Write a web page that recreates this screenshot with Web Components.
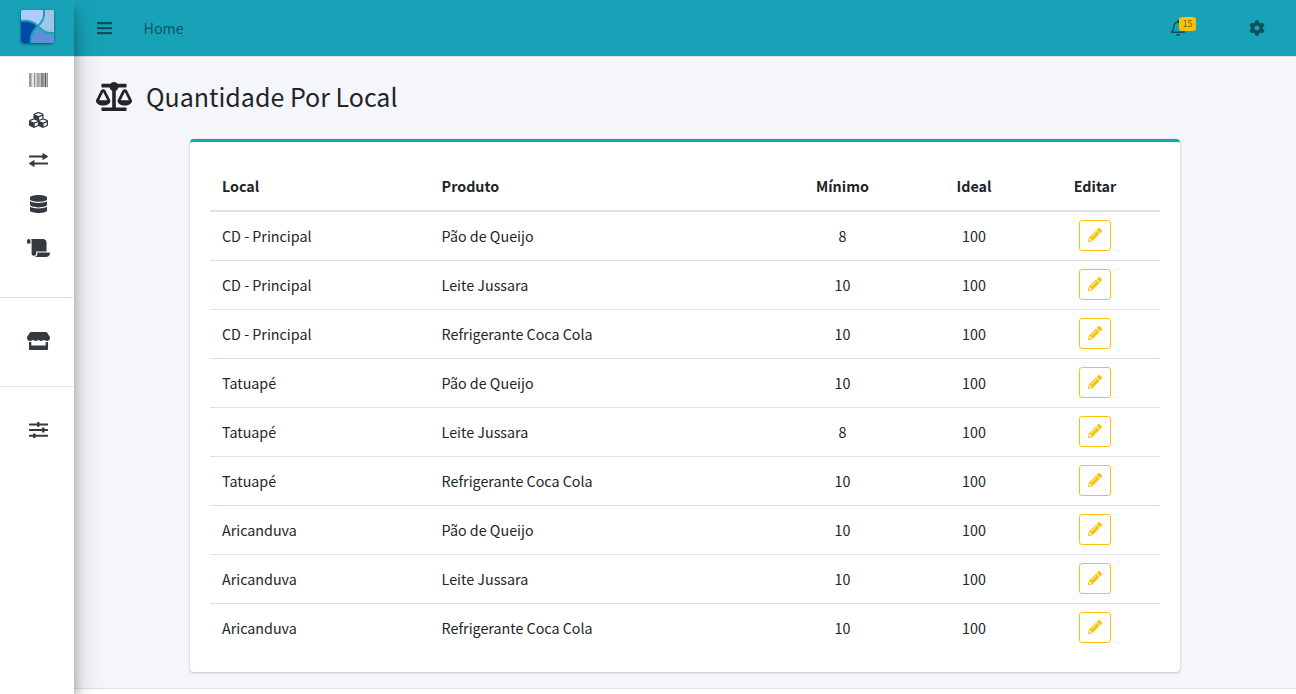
<!DOCTYPE html>
<html lang="pt-BR">
<head>
<meta charset="utf-8">
<title>Quantidade Por Local</title>
<style>
html,body{margin:0;height:100%;overflow:hidden}
body{font-family:"Noto Sans CJK SC","Noto Sans",sans-serif;font-size:14.300px;line-height:24px;color:#212529;background:#f4f6f9}
</style>
</head>
<body>
<app-shell>
  <side-bar slot="side"></side-bar>
  <top-bar slot="top">Home</top-bar>
  <page-title slot="main">Quantidade Por Local</page-title>
  <stock-card slot="main"><stock-table></stock-table></stock-card>
</app-shell>
<script>
const define = (name, html, setup) => customElements.define(name, class extends HTMLElement {
  connectedCallback() {
    if (this.shadowRoot) return;
    const root = this.attachShadow({mode: 'open'});
    const t = document.createElement('template');
    t.innerHTML = html;
    root.append(t.content.cloneNode(true));
    if (setup) setup(root, this);
  }
});

const ICONS = {
  bars: ['0 0 448 512', '<path d="M16 132h416c9 0 16-7 16-16V76c0-9-7-16-16-16H16C7 60 0 67 0 76v40c0 9 7 16 16 16zm0 160h416c9 0 16-7 16-16v-40c0-9-7-16-16-16H16c-9 0-16 7-16 16v40c0 9 7 16 16 16zm0 160h416c9 0 16-7 16-16v-40c0-9-7-16-16-16H16c-9 0-16 7-16 16v40c0 9 7 16 16 16z"/>'],
  scale: ['0 0 640 512', '<path d="M256 336h-.02c0-16.18 1.34-8.73-85.05-181.51-17.65-35.29-68.19-35.36-85.87 0C-2.06 328.75.02 320.33.02 336H0c0 44.18 57.31 80 128 80s128-35.82 128-80zM128 176l72 144H56l72-144zm511.98 160c0-16.18 1.34-8.73-85.05-181.51-17.65-35.29-68.19-35.36-85.87 0-87.12 174.26-85.04 165.84-85.04 181.51H384c0 44.18 57.31 80 128 80s128-35.82 128-80h-.02zM440 320l72-144 72 144H440zm88 128H352V153.25c23.51-10.29 41.16-31.48 46.39-57.25H528c8.84 0 16-7.16 16-16V48c0-8.84-7.16-16-16-16H383.64C369.04 12.68 346.09 0 320 0s-49.04 12.68-63.64 32H112c-8.84 0-16 7.16-16 16v32c0 8.84 7.16 16 16 16h129.61c5.23 25.76 22.87 46.96 46.39 57.25V448H112c-8.84 0-16 7.16-16 16v32c0 8.84 7.16 16 16 16h416c8.84 0 16-7.16 16-16v-32c0-8.84-7.16-16-16-16z"/>'],
  database: ['0 0 448 512', '<path d="M448 73.143v45.714C448 159.143 347.667 192 224 192S0 159.143 0 118.857V73.143C0 32.857 100.333 0 224 0s224 32.857 224 73.143zM448 176v102.857C448 319.143 347.667 352 224 352S0 319.143 0 278.857V176c48.125 33.143 136.208 48.572 224 48.572S399.874 209.143 448 176zm0 160v102.857C448 479.143 347.667 512 224 512S0 479.143 0 438.857V336c48.125 33.143 136.208 48.572 224 48.572S399.874 369.143 448 336z"/>'],
  scroll: ['0 0 640 512', '<path d="M48 0C21.53 0 0 21.53 0 48v64c0 8.84 7.16 16 16 16h80V48C96 21.53 74.47 0 48 0zm208 412.57V352h288V96c0-52.94-43.06-96-96-96H111.59C121.74 13.41 128 29.92 128 48v368c0 38.87 34.65 69.65 74.75 63.12C234.22 474 256 444.46 256 412.57zM288 384v32c0 52.93-43.06 96-96 96h336c61.86 0 112-50.14 112-112 0-8.84-7.16-16-16-16H288z"/>'],
  pencil: ['0 0 512 512', '<path d="M497.9 142.1l-46.1 46.1c-4.7 4.7-12.3 4.7-17 0l-111-111c-4.7-4.7-4.7-12.3 0-17l46.1-46.1c18.7-18.7 49.1-18.7 67.9 0l60.1 60.1c18.8 18.7 18.8 49.1 0 67.9zM284.2 99.8L21.6 362.4.4 483.9c-2.9 16.4 11.4 30.6 27.8 27.8l121.5-21.3 262.6-262.6c4.7-4.7 4.7-12.3 0-17l-111-111c-4.8-4.7-12.4-4.7-17.1 0zM124.1 339.9c-5.5-5.5-5.5-14.3 0-19.8l154-154c5.5-5.5 14.3-5.5 19.8 0s5.5 14.3 0 19.8l-154 154c-5.5 5.5-14.3 5.5-19.8 0zM88 424h48v36.3l-64.5 11.3-31.1-31.1L51.7 376H88v48z"/>'],
  cog: ['0 0 512 512', '<path d="M487.4 315.7l-42.6-24.6c4.3-23.2 4.3-47 0-70.2l42.6-24.6c4.9-2.8 7.1-8.6 5.5-14-11.1-35.6-30-67.8-54.7-94.6-3.8-4.1-10-5.1-14.8-2.3L380.8 110c-17.9-15.4-38.5-27.3-60.8-35.1V25.8c0-5.6-3.9-10.5-9.4-11.7-36.7-8.2-74.3-7.8-109.2 0-5.5 1.2-9.4 6.1-9.4 11.7V75c-22.2 7.9-42.8 19.8-60.8 35.1L88.7 85.5c-4.9-2.8-11-1.9-14.8 2.3-24.7 26.7-43.6 58.9-54.7 94.6-1.7 5.4.6 11.2 5.5 14L67.3 221c-4.3 23.2-4.3 47 0 70.2l-42.6 24.6c-4.9 2.8-7.1 8.6-5.5 14 11.1 35.6 30 67.8 54.7 94.6 3.8 4.1 10 5.1 14.8 2.3l42.6-24.6c17.9 15.4 38.5 27.3 60.8 35.1v49.2c0 5.6 3.9 10.5 9.4 11.7 36.7 8.2 74.3 7.8 109.2 0 5.5-1.2 9.4-6.1 9.4-11.7v-49.2c22.2-7.9 42.8-19.8 60.8-35.1l42.6 24.6c4.9 2.8 11 1.9 14.8-2.3 24.7-26.7 43.6-58.9 54.7-94.6 1.5-5.5-.7-11.3-5.6-14.1zM256 336c-44.1 0-80-35.9-80-80s35.9-80 80-80 80 35.9 80 80-35.9 80-80 80z"/>'],
  bell: ['0 0 448 512', '<path d="M439.39 362.29c-19.32-20.76-55.47-51.99-55.47-154.29 0-77.7-54.48-139.9-127.94-155.16V32c0-17.67-14.32-32-31.98-32s-31.98 14.33-31.98 32v20.84C118.56 68.1 64.08 130.3 64.08 208c0 102.3-36.15 133.53-55.47 154.29-6 6.45-8.66 14.16-8.61 21.71.11 16.4 12.98 32 32.1 32h383.8c19.12 0 32-15.6 32.1-32 .05-7.55-2.61-15.27-8.61-21.71zM67.53 368c21.22-27.97 44.42-74.33 44.53-159.42 0-.2-.06-.38-.06-.58 0-61.86 50.14-112 112-112s112 50.14 112 112c0 .2-.06.38-.06.58.11 85.1 23.31 131.46 44.53 159.42H67.53zM224 512c35.32 0 63.97-28.65 63.97-64H160.03c0 35.35 28.65 64 63.97 64z"/>'],
  barcode: ['0 0 19 14', ['#a89a94','#7e9eb4','#b5c3bd','#e6eecb','#d8e2f0','#a58dab','#d8d0b8','#c4d3c9','#a8a0c4','#9ab0a8','#d0a6a8','#8fd3c9','#a07c9c','#7c8494','#c0847e','#a0c8a0','#3d5b4a','#c6d6a0','#7c90a8'].map((c, i) => `<path fill="${c}" d="M${i} 0h1v14h-1z"/>`).join('')],
  cubes: ['0 32 512 448', '<path d="M488.6 250.2L392 214V105.5c0-15-9.3-28.4-23.4-33.7l-100-37.5c-8.1-3.1-17.1-3.1-25.3 0l-100 37.5c-14.1 5.3-23.4 18.7-23.4 33.7V214l-96.6 36.2C9.3 255.5 0 268.900 0 283.900V394c0 13.600 7.700 26.100 19.900 32.200l100 50c10.100 5.100 22.100 5.100 32.200 0l103.900-52 103.900 52c10.100 5.100 22.100 5.100 32.200 0l100-50c12.200-6.100 19.900-18.600 19.900-32.200V283.900c0-15-9.300-28.400-23.400-33.700zM358 214.800l-85 31.900v-68.200l85-37v73.300zM154 104.100l102-38.200 102 38.200v.6l-102 41.400-102-41.400v-.6zm84 291.100l-85 42.500v-79.100l85-38.800v75.400zm0-112l-102 41.400-102-41.400v-.6l102-38.200 102 38.200v.6zm240 112l-85 42.500v-79.100l85-38.800v75.400zm0-112l-102 41.400-102-41.400v-.6l102-38.200 102 38.200v.6z"/>'],
  exchange: ['0 0 19 14', '<path d="M.5 2.500h13V.5q0-.7.700-.3L18.700 3q.5.500 0 1L14.200 6.800q-.7.4-.7-.3V4.500H.500Q0 4.500 0 4V3q0-.5.500-.5zM18.500 9.500h-13V7.500q0-.7-.7-.3L.3 10q-.5.500 0 1l4.500 2.800q.7.4.7-.3v-2h13q.5 0 .5-.5v-1q0-.5-.5-.5z"/>'],
  store: ['0 0 616 512', '<path d="M602 118.6L537.1 15C531.3 5.7 521 0 510 0H106C95 0 84.7 5.7 78.9 15L14 118.6c-33.500 53.500-3.800 127.900 58.800 136.400 4.500.6 9.100.9 13.700.9 29.600 0 55.800-13 73.800-33.100 18 20.100 44.300 33.100 73.800 33.100 29.600 0 55.800-13 73.800-33.100 18 20.100 44.300 33.100 73.800 33.100 29.600 0 55.800-13 73.800-33.100 18.100 20.100 44.300 33.100 73.800 33.100 4.700 0 9.200-.3 13.700-.9 62.800-8.400 92.600-82.800 59-136.400zM529.500 288c-10 0-19.900-1.500-29.500-3.800V384H116v-99.800c-9.600 2.200-19.500 3.800-29.500 3.800-6 0-12.100-.4-18-1.200-5.600-.8-11.100-2.100-16.400-3.600V480c0 17.700 14.300 32 32 32h448c17.700 0 32-14.300 32-32V283.200c-5.400 1.600-10.800 2.900-16.400 3.600-6.100.8-12.100 1.200-18.200 1.200z"/>'],
  sliders: ['0 0 19 16', '<path d="M.5 1.500H8V.500q0-.5.500-.5h1.500q.5 0 .5.500v1h8q.5 0 .5.500v1q0 .5-.5.500h-8v.8q0 .5-.5.500H8.500q-.5 0-.5-.5v-.8H.500Q0 3.500 0 3V2q0-.5.500-.5zM.5 7H13V6q0-.5.500-.5H15q.5 0 .5.500v1h3q.5 0 .5.500v1q0 .5-.5.500h-3v1q0 .5-.5.500h-1.500q-.5 0-.5-.5V9H.500Q0 9 0 8.500v-1Q0 7 .5 7zM.5 12.800H4V12q0-.5.500-.5H6q.5 0 .5.500v.8h12q.5 0 .5.500v1q0 .5-.5.500h-12v.700q0 .5-.5.500H4.500q-.5 0-.5-.5v-.7H.500q-.5 0-.5-.5v-1q0-.5.500-.5z"/>']
};

define('ui-icon', `<style>:host{display:block;flex:none}svg{display:block;width:100%;height:100%;fill:currentColor}</style>`, (root, el) => {
  const [box, body] = ICONS[el.getAttribute('name')];
  root.innerHTML += `<svg viewBox="${box}" preserveAspectRatio="none" aria-hidden="true">${body}</svg>`;
});

define('app-shell', `<style>
:host{display:grid;grid-template-columns:74px minmax(0,1fr);height:100vh}
.side{position:relative;z-index:2;display:grid}
.body{display:flex;flex-direction:column;min-width:0}
main{height:631px;box-sizing:border-box;padding:18px 22px 0;flex:none}
footer{flex:1;background:#fff;border-top:1px solid #dee2e6}
</style><div class="side"><slot name="side"></slot></div><div class="body"><slot name="top"></slot><main><slot name="main"></slot></main><footer></footer></div>`);

define('brand-logo', `<style>:host{display:block;width:33px;height:33px;border-radius:2px;box-shadow:0 1px 3px rgba(0,0,0,.5)}svg{display:block;border-radius:2px}</style>
<svg width="33" height="33" viewBox="0 0 33 33"><path fill="#accbff" d="M0 0h33v33H0z"/><path fill="#9fc5e8" d="M23 0h10v23C24 23.500 21 20.500 17 16 22 11 23.500 8 23 0z"/><path fill="#5f8fd6" d="M33 23v10H10C9.500 24 11.500 20 17 16 21 20.500 24 23.500 33 23z"/><path fill="#0047ab" d="M0 11C8 10 12.500 11.500 17 16 11.500 20 9.500 24 10 33H0z"/><g fill="none" stroke="#17a2b8" stroke-width="2"><path d="M0 11C8 10 12.500 11.500 17 16S24 23.500 33 23"/><path d="M23 0C23.500 8 22 11 17 16S9.500 24 10 33"/></g></svg>`);

define('side-bar', `<style>
:host{display:flex;flex-direction:column;background:#fff;color:#343a40;box-shadow:0 14px 28px rgba(0,0,0,.25),0 10px 10px rgba(0,0,0,.22)}
.brand{box-sizing:border-box;padding:10px 0 0 21px;background:#17a2b8;border-bottom:1px solid #dee2e6;height:57px}
nav{display:flex;flex-direction:column;align-items:center;padding:0 0 0 3px}
nav+nav{border-top:1px solid #dee2e6}
.main{height:240px;box-sizing:border-box;padding-top:16px}
.shop{height:86px;padding-bottom:2px;justify-content:center}
.conf{padding-top:35px}
</style>
<div class="brand"><brand-logo></brand-logo></div>
<nav class="main">
<ui-icon name="barcode" style="width:19px;height:14px"></ui-icon>
<ui-icon name="cubes" style="width:19px;height:16px;margin-top:25px"></ui-icon>
<ui-icon name="exchange" style="width:19px;height:14px;margin-top:25px"></ui-icon>
<ui-icon name="database" style="width:17px;height:18px;margin-top:28px"></ui-icon>
<ui-icon name="scroll" style="width:23px;height:18px;margin-top:26px"></ui-icon>
</nav>
<nav class="shop"><ui-icon name="store" style="width:23px;height:18px"></ui-icon></nav>
<nav class="conf"><ui-icon name="sliders" style="width:19px;height:16px"></ui-icon></nav>`);

define('top-bar', `<style>
:host{display:flex;align-items:center;height:56px;flex:none;background:#17a2b8;border-bottom:1px solid #dee2e6;color:rgba(0,0,0,.5);padding:0 31px 0 23px}
.home{margin-left:31.500px;flex:1}
.bell{position:relative;margin-right:64px}
.badge{position:absolute;left:8px;top:-3px;width:17px;height:14px;border-radius:3px;background:#ffc107;color:rgba(0,0,0,.6);font-size:8.600px;line-height:12px;text-align:center}
</style>
<ui-icon name="bars" style="width:15px;height:16px"></ui-icon>
<span class="home"><slot></slot></span>
<div class="bell"><ui-icon name="bell" style="width:14px;height:16px"></ui-icon><span class="badge">15</span></div>
<ui-icon name="cog" style="width:16px;height:16px"></ui-icon>`);

define('page-title', `<style>
:host{display:flex;align-items:center;gap:14px;height:42px;font-size:25px;line-height:34px}
</style><ui-icon name="scale" style="width:36px;height:29px"></ui-icon><span><slot></slot></span>`);

define('stock-card', `<style>
:host{display:block;box-sizing:border-box;width:990px;height:533px;margin:22px 0 0 94px;padding:20px;background:#fff;border-top:3px solid #17a2b8;border-radius:4px;box-shadow:0 0 1px rgba(0,0,0,.125),0 1px 3px rgba(0,0,0,.2)}
</style><slot></slot>`);

define('edit-button', `<style>
:host{display:flex;justify-content:center;box-sizing:border-box;width:32px;height:31px;padding-top:7px;border:1px solid #ffc107;border-radius:3px;color:#ffc107}
</style><ui-icon name="pencil" style="width:14px;height:14px"></ui-icon>`);

define('stock-table', `<style>
:host{display:block}
.row{display:grid;grid-template-columns:219.600px 337.400px 151px 112px 130px;height:48px;border-top:1px solid #dee2e6}
.row>*{padding:12px 12px 0}
.row>:nth-child(n+3){text-align:center}
.row>.edit{display:flex;justify-content:center;padding-top:8px}
.head{font-weight:700;border-top:0;border-bottom:2px solid #dee2e6}
.head+.row{border-top:0}
</style><div class="row head"><span>Local</span><span>Produto</span><span>Mínimo</span><span>Ideal</span><span>Editar</span></div>`, root => {
  const products = ['Pão de Queijo', 'Leite Jussara', 'Refrigerante Coca Cola'];
  const places = {'CD - Principal': [8, 10, 10], 'Tatuapé': [10, 8, 10], 'Aricanduva': [10, 10, 10]};
  for (const [place, mins] of Object.entries(places)) mins.forEach((min, i) => {
    const row = document.createElement('div');
    row.className = 'row';
    row.innerHTML = `<span>${place}</span><span>${products[i]}</span><span>${min}</span><span>100</span><span class="edit"><edit-button></edit-button></span>`;
    root.append(row);
  });
});
</script>
</body>
</html>
